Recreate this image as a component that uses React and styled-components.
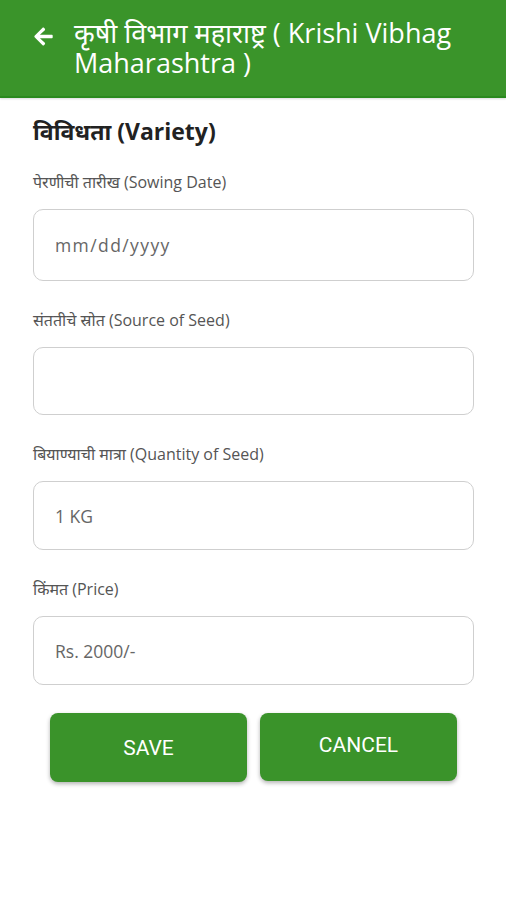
import React from 'react';
import styled, { createGlobalStyle } from 'styled-components';
import { FaArrowLeft } from 'react-icons/fa';

const GlobalStyle = createGlobalStyle`
  body {
    margin: 0;
    background: #ffffff;
    font-family: "Open Sans", "Noto Sans", sans-serif;
  }
`;

const Page = styled.div`
  width: 506px;
  min-height: 900px;
  background: #ffffff;
`;

const Header = styled.header`
  display: flex;
  align-items: flex-start;
  background: #3a942a;
  border-bottom: 2px solid #2a8a1e;
  padding: 18px 20px 18px 33px;
  height: 60px;
  box-shadow: 0 1px 2px rgba(0, 0, 0, 0.15);
`;

const BackButton = styled.div`
  color: #ffffff;
  font-size: 21px;
  margin-top: 8px;
  margin-right: 20px;
  display: flex;
`;

const Title = styled.h1`
  margin: 0;
  color: #ffffff;
  font-size: 27px;
  font-weight: 400;
  line-height: 30px;
`;

const Form = styled.div`
  padding: 16px 32px 0 33px;
  display: flex;
  flex-direction: column;
`;

const SectionTitle = styled.h2`
  margin: 0 0 24px;
  font-size: 23px;
  font-weight: 700;
  color: #222;
  line-height: 34px;
`;

const Field = styled.div`
  display: flex;
  flex-direction: column;
  margin-bottom: 29px;
`;

const Label = styled.label`
  font-size: 16px;
  color: #555;
  line-height: 20px;
  margin-bottom: 17px;
`;

const Input = styled.div`
  height: ${p => p.h || 69}px;
  box-sizing: border-box;
  border: 1px solid #cfcfcf;
  border-radius: 10px;
  display: flex;
  align-items: center;
  padding-left: 21px;
  font-size: 17.5px;
  color: #666;
  letter-spacing: ${p => p.spaced ? '1.4px' : '0'};
`;

const Buttons = styled.div`
  display: flex;
  gap: 13px;
  padding-left: 50px;
  margin-top: -1px;
`;

const Button = styled.button`
  width: 197px;
  height: ${p => p.h || 69}px;
  border: none;
  border-radius: 8px;
  background: #3a932a;
  color: #ffffff;
  font-family: Roboto, "Liberation Sans", sans-serif;
  font-size: 21px;
  padding: 0 0 ${p => p.raised ? '4px' : '0'};
  box-shadow: 0 2px 4px rgba(0, 0, 0, 0.3);
`;

export default function App() {
  return (
    <Page>
      <GlobalStyle />
      <Header>
        <BackButton><FaArrowLeft /></BackButton>
        <Title>कृषी विभाग महाराष्ट्र ( Krishi Vibhag Maharashtra )</Title>
      </Header>
      <Form>
        <SectionTitle>विविधता (Variety)</SectionTitle>
        <Field>
          <Label>पेरणीची तारीख (Sowing Date)</Label>
          <Input h={72} spaced>mm/dd/yyyy</Input>
        </Field>
        <Field>
          <Label>संततीचे स्रोत (Source of Seed)</Label>
          <Input h={68} />
        </Field>
        <Field>
          <Label>बियाण्याची मात्रा (Quantity of Seed)</Label>
          <Input>1 KG</Input>
        </Field>
        <Field>
          <Label>किंमत (Price)</Label>
          <Input>Rs. 2000/-</Input>
        </Field>
      </Form>
      <Buttons>
        <Button>SAVE</Button>
        <Button h={68} raised>CANCEL</Button>
      </Buttons>
    </Page>
  );
}
